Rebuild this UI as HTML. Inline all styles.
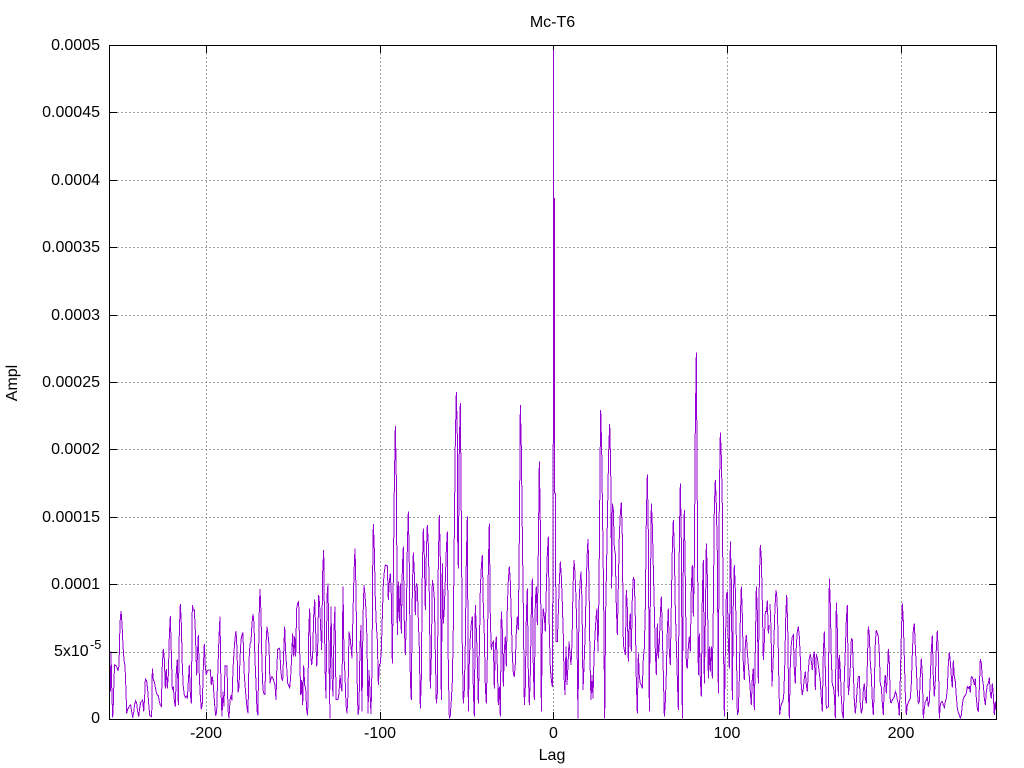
<!DOCTYPE html>
<html><head><meta charset="utf-8"><title>Mc-T6</title>
<style>
html,body{margin:0;padding:0;background:#fff;width:1024px;height:768px;overflow:hidden}
svg{display:block}
text{font-family:"Liberation Sans",sans-serif;font-size:16px;fill:#000}
.y{text-anchor:end}.c{text-anchor:middle}
</style></head><body>
<svg width="1024" height="768" viewBox="0 0 1024 768" xmlns="http://www.w3.org/2000/svg">
<defs><clipPath id="p"><rect x="109" y="45" width="888" height="675"/></clipPath></defs>
<g stroke="#a0a0a0" stroke-width="1" stroke-dasharray="2 2" shape-rendering="crispEdges" fill="none">
<path d="M109 112.5H997M109 180.5H997M109 247.5H997M109 315.5H997M109 382.5H997M109 449.5H997M109 517.5H997M109 584.5H997M109 652.5H997"/>
<path d="M206.5 45V720M380.5 45V720M553.5 45V720M727.5 45V720M901.5 45V720"/>
</g>
<g clip-path="url(#p)" fill="none" stroke="#9400d3" shape-rendering="crispEdges">
<polyline transform="translate(105,570) scale(.33333)" stroke-width="3" points="14,288 16,365 18,245 20,345 23,443 25,400 27,325 29,285 33,287 36,292 39,302 42,288 45,160 48,123 51,160 54,228 57,270 60,288 63,362 65,430 68,418 71,412 74,408 77,405 80,425 83,443 86,428 89,402 92,392 95,400 98,425 101,440 104,415 107,397 110,395 113,390 116,425 119,380 121,327 125,333 128,360 131,400 134,435 137,438 140,440 142,295 145,330 148,335 151,352 154,367 157,375 160,377 163,395 166,405 169,409 172,282 175,237 178,267 181,355 184,297 187,355 190,315 193,198 196,138 199,250 202,360 205,350 208,392 211,410 214,303 217,268 220,405 223,180 226,102 229,162 232,290 235,352 238,375 241,382 244,378 247,385 250,335 253,285 256,372 259,400 262,105 265,120 268,120 271,183 275,317 278,237 280,195 283,320 286,380 289,418 292,400 295,292 298,222 301,292 304,315 307,302 313,300 316,300 319,345 322,320 325,345 329,405 332,437 335,425 338,320 342,200 345,140 348,365 351,440 354,365 357,410 360,287 366,288 369,420 372,445 375,392 378,375 381,392 384,297 387,247 390,205 393,183 396,237 399,368 402,352 405,265 408,210 411,195 414,187 417,300 420,345 423,380 426,415 429,430 432,272 435,222 438,215 441,160 444,132 447,160 450,270 453,340 456,422 459,437 462,152 465,57 468,130 471,290 474,360 477,372 480,373 483,222 486,170 489,192 492,225 495,340 498,325 501,320 504,325 507,335 510,345 513,390 515,310 518,238 524,235 527,295 530,325 533,332 536,250 539,170 542,250 545,290 548,340 551,345 554,355 557,320 560,260 563,190 566,260 569,200 572,260 575,115 578,100 581,95 584,240 587,375 590,330 593,405 596,287 599,345 602,355 605,420 608,437 611,195 614,115 617,255 620,285 623,255 626,140 629,88 632,180 635,290 638,235 641,75 644,105 647,175 650,240 653,10 656,-60 660,285 663,385 666,80 669,40 672,265 675,445"/>
<polyline transform="translate(330,410) scale(.33333)" stroke-width="3" points="0,838 3,590 6,790 9,860 12,657 15,590 18,868 24,868 27,850 30,795 33,830 36,845 39,530 42,740 45,795 48,885 51,910 54,850 57,665 60,680 63,710 66,745 69,610 72,490 75,415 78,540 81,790 84,915 87,895 90,710 93,645 96,905 99,625 102,525 105,555 108,600 111,690 114,910 117,780 120,845 123,912 126,770 128,485 130,342 133,420 136,570 139,645 142,690 145,825 148,765 151,760 154,720 157,620 160,520 163,485 166,465 172,468 175,570 178,515 181,490 184,555 187,760 190,500 193,228 196,48 199,207 202,675 205,515 208,635 211,520 214,670 217,475 220,410 223,650 226,735 229,625 232,410 235,305 238,470 241,810 244,870 247,540 250,428 253,490 256,615 259,520 262,530 265,630 268,715 271,895 274,805 277,480 280,355 283,440 286,600 289,430 292,345 295,405 298,555 301,835 304,740 307,510 310,530 313,565 316,730 319,880 322,850 325,450 328,315 331,450 334,870 337,460 340,640 343,595 346,510 349,420 352,365 355,780 358,925 361,915 364,870 367,815 370,650 373,365 376,90 379,-54 382,80 382,340 385,475 388,105 391,-21 394,330 397,730 400,880 403,840 406,700 409,450 412,320 415,905 418,750 421,680 424,640 427,620 430,840 433,920 436,585 439,660 442,750 445,880 448,725 451,535 454,470 457,435 460,590 463,675 466,830 469,880 472,740 475,475 478,340 481,630 484,720 487,700 490,695 493,835 496,710 499,680 502,770 505,885 508,830 511,920 514,605 517,660 520,830 523,720 526,680 529,770 532,590 535,510 538,470 541,515 544,630 547,735 550,790 553,800 556,760 559,665 562,620 565,660 568,380 571,-15 574,115 577,370 580,595 583,885 586,830 589,620 592,535 595,795 598,885 601,790 604,600 607,505 610,780 613,870 616,570 619,530 622,645 625,420 628,155 631,345 634,905 637,650 640,595 643,620 646,665 649,535 652,430 655,380 658,665 661,775 664,810 667,830"/>
<polyline stroke-width="1" points="552.5,687 553.5,368 553.5,45 553.5,368 554.5,198 554.5,493 555.3,493"/>
<polyline transform="translate(550,340) scale(.33333)" stroke-width="3" points="16,460 18,905 22,905 25,815 28,725 31,665 34,710 37,790 40,890 42,1005 45,1065 48,920 51,1035 54,975 57,905 60,940 63,975 66,910 69,745 72,660 75,700 78,775 81,895 84,1135 87,795 90,730 93,695 96,785 99,1050 102,980 105,895 108,770 111,655 114,597 117,720 120,960 123,1080 126,1005 129,1075 132,950 135,885 138,835 141,805 144,935 147,750 150,393 152,210 155,325 158,550 161,780 164,1135 167,815 170,660 173,497 176,335 179,252 182,375 185,745 187,490 190,510 193,625 196,640 199,800 202,885 205,735 208,585 211,520 214,487 217,590 220,915 223,930 226,945 229,750 232,805 235,965 238,860 241,820 244,935 247,770 250,712 253,720 256,835 259,1025 262,1120 265,940 268,1010 271,1030 274,1035 277,1045 280,955 283,925 286,800 289,535 292,403 295,580 298,1115 301,775 304,490 307,555 310,685 313,810 316,935 319,1005 322,850 325,955 328,910 331,825 334,770 337,880 340,1000 343,1130 346,1085 349,1000 352,870 355,805 358,935 361,975 364,790 367,625 370,540 373,630 376,810 379,910 382,1015 385,1110 388,600 391,430 394,605 397,1135 400,665 403,510 406,725 409,975 412,985 415,920 418,890 421,935 424,740 427,675 430,830 433,670 436,250 439,37 442,520 445,1005 448,880 451,1020 454,1070 457,765 460,660 463,1030 466,845 469,610 472,710 475,1015 478,920 481,995 484,920 487,1015 490,805 493,500 496,420 499,495 502,640 505,1060 508,470 511,277 514,350 517,500 520,855 523,1130 526,935 529,765 532,755 535,905 538,985 541,605 544,725 547,1080 550,775 553,675 556,750 559,895 562,1125 565,1115 568,1015 571,835 574,740 577,825 580,975 583,1020 586,915 589,885 592,935 595,975 598,1010 601,1055 604,1095 607,1015 610,985 613,1110 616,925 619,740 622,815 625,1030 628,720 631,615 634,655 637,790 640,960 643,905 646,815 649,815 652,782 655,880 658,855"/>
<polyline transform="translate(770,570) scale(.33333)" stroke-width="3" points="0,102 3,175 6,350 9,285 12,205 15,110 18,60 21,85 24,190 27,355 29,435 32,410 35,400 38,395 41,380 44,300 47,150 50,75 53,165 56,390 58,445 61,280 64,220 67,200 70,195 73,300 76,340 79,225 82,185 85,170 88,200 91,265 94,350 97,375 100,355 103,325 106,305 109,345 112,365 115,300 118,265 121,252 124,275 127,300 130,260 133,245 136,360 139,252 142,265 145,285 148,310 151,335 154,385 157,425 160,245 163,185 166,300 169,415 172,412 175,410 178,25 181,105 184,265 187,345 190,350 193,375 196,445 199,97 202,180 205,380 208,255 211,300 214,385 217,430 220,445 223,325 226,240 229,150 232,105 235,375 238,345 241,290 244,207 247,210 250,300 253,395 256,430 259,395 262,350 265,320 268,320 271,405 274,430 277,415 280,360 283,340 286,385 289,400 292,280 295,170 298,195 301,280 304,315 307,395 310,435 313,350 316,215 319,180 322,190 325,200 328,250 331,345 334,350 337,400 340,435 343,345 346,315 349,370 352,315 355,237 358,280 361,395 364,398 367,390 370,385 373,380 376,365 379,372 382,390 385,400 388,437 391,325 394,195 397,100 400,155 403,265 406,375 409,435 412,405 415,398 418,390 421,385 424,340 427,250 430,180 433,160 436,230 439,295 442,365 445,400 448,395 451,315 454,265 457,315 460,445 463,415 466,395 469,390 472,380 475,410 478,395 481,320 484,240 487,197 490,325 493,380 496,330 499,235 502,182 505,250 508,445 511,405 514,395 517,395 520,405 523,413 526,395 529,385 532,355 535,282 538,247 541,275 544,320 547,352 550,272 553,320 556,335 559,380 562,415 565,428 568,435 571,445 574,435 577,405 580,385 583,380 586,375 589,370 592,350 595,355 598,350 601,368 604,320 607,322 610,330 613,345 616,325 619,385 622,415 625,425 628,355 631,267 634,280 637,325 640,345 643,385 646,405 649,365 652,345 655,340 658,322 661,370 664,385 667,340 670,375 673,435 676,395 678,420"/>
</g>
<g stroke="#000" stroke-width="1" fill="none" shape-rendering="crispEdges">
<rect x="109.5" y="45.5" width="887" height="674"/>
<path d="M109 112.5h8M109 180.5h8M109 247.5h8M109 315.5h8M109 382.5h8M109 449.5h8M109 517.5h8M109 584.5h8M109 652.5h8"/>
<path d="M997 112.5h-8M997 180.5h-8M997 247.5h-8M997 315.5h-8M997 382.5h-8M997 449.5h-8M997 517.5h-8M997 584.5h-8M997 652.5h-8"/>
<path d="M206.5 45v8M380.5 45v8M553.5 45v5M727.5 45v8M901.5 45v8"/>
<path d="M206.5 720v-8M380.5 720v-8M553.5 720v-8M727.5 720v-8M901.5 720v-8"/>
</g>
<text class="y" x="100" y="50">0.0005</text>
<text class="y" x="100" y="117">0.00045</text>
<text class="y" x="100" y="185">0.0004</text>
<text class="y" x="100" y="252">0.00035</text>
<text class="y" x="100" y="320">0.0003</text>
<text class="y" x="100" y="387">0.00025</text>
<text class="y" x="100" y="454">0.0002</text>
<text class="y" x="100" y="522">0.00015</text>
<text class="y" x="100" y="589">0.0001</text>
<text x="54" y="656">5x10</text>
<text x="90" y="649" style="font-size:12.8px">-5</text>
<text class="y" x="100" y="723">0</text>
<text class="c" x="206" y="738">-200</text>
<text class="c" x="380" y="738">-100</text>
<text class="c" x="553.5" y="738">0</text>
<text class="c" x="727" y="738">100</text>
<text class="c" x="901" y="738">200</text>
<text class="c" x="552.5" y="27">Mc-T6</text>
<text class="c" x="552" y="760">Lag</text>
<text class="c" transform="translate(17,383) rotate(-90)">Ampl</text>
</svg>
</body></html>
